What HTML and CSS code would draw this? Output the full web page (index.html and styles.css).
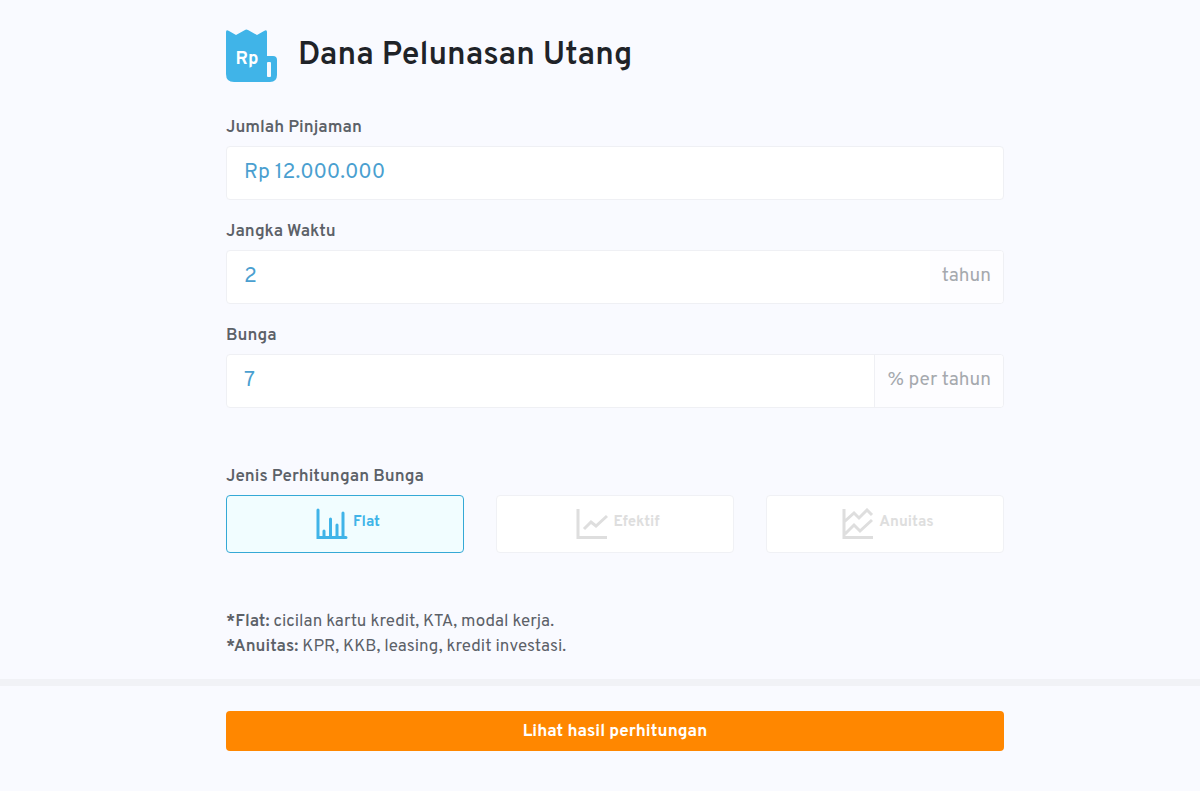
FILE: index.html
```html
<!DOCTYPE html>
<html lang="id">
<head>
<meta charset="utf-8">
<meta name="viewport" content="width=device-width, initial-scale=1">
<title>Dana Pelunasan Utang</title>
<link rel="stylesheet" href="styles.css">
</head>
<body>
<form class="calculator">
  <main class="content">
    <header class="heading">
      <svg class="logo" viewBox="0 0 52 54" role="img" aria-label="Rp">
        <path class="logo-shape" d="M0 3Q0 0 3 2L10 6L19 1Q20 0 22 1L31 6L38 2Q41 0 41 3V27H47Q51 27 51 31V46Q51 53 44 53H8Q0 53 0 45Z"/>
        <rect class="logo-slot" x="41" y="33" width="4" height="15" rx="1"/>
        <text class="logo-text" x="21" y="35" text-anchor="middle">Rp</text>
      </svg>
      <h1 class="title">Dana Pelunasan Utang</h1>
    </header>

    <div class="field">
      <label class="label" for="amount">Jumlah Pinjaman</label>
      <div class="control"><input class="input" id="amount" type="text" value="Rp 12.000.000"></div>
    </div>
    <div class="field">
      <label class="label" for="period">Jangka Waktu</label>
      <div class="control"><input class="input" id="period" type="text" value="2"><span class="unit">tahun</span></div>
    </div>
    <div class="field">
      <label class="label" for="rate">Bunga</label>
      <div class="control"><input class="input" id="rate" type="text" value="7"><span class="unit unit-divided">% per tahun</span></div>
    </div>

    <section class="methods" aria-labelledby="method-label">
      <h2 class="label" id="method-label">Jenis Perhitungan Bunga</h2>
      <div class="options">
        <button class="option option-active" type="button" aria-pressed="true">
          <svg class="chart" viewBox="0 0 32 32" aria-hidden="true"><path d="M2 2V29.500H30M8 29V23M14.500 29V11M21 29V17M27 29V5"/></svg>
          <span>Flat</span>
        </button>
        <button class="option" type="button" aria-pressed="false">
          <svg class="chart" viewBox="0 0 32 32" aria-hidden="true"><path d="M2 1V29.500H31M8 21L15 14L20 18L31 8"/></svg>
          <span>Efektif</span>
        </button>
        <button class="option" type="button" aria-pressed="false">
          <svg class="chart" viewBox="0 0 32 32" aria-hidden="true"><path d="M2 1V29.500H31M2 14L12 5L17 10L25 2L30 7M3 26L12 17L18 23L30 12"/></svg>
          <span>Anuitas</span>
        </button>
      </div>
    </section>

    <p class="notes"><strong>*Flat:</strong> cicilan kartu kredit, KTA, modal kerja.<br><strong>*Anuitas:</strong> KPR, KKB, leasing, kredit investasi.</p>
  </main>
  <footer class="footer">
    <button class="submit" type="submit">Lihat hasil perhitungan</button>
  </footer>
</form>
</body>
</html>
```
FILE: styles.css
```css
* { box-sizing: border-box; }
body {
  margin: 0;
  background: #f9faff;
  color: #5c6168;
  font-family: Overpass, Inter, sans-serif;
}
.content { padding: 29px 196px 19px 226px; }
.heading {
  display: flex;
  align-items: flex-start;
  gap: 20px;
  margin-bottom: 33px;
}
.logo { width: 52px; height: 54px; flex: none; }
.logo-shape { fill: #40b4e8; }
.logo-slot { fill: #f9faff; }
.logo-text { fill: #fff; font-size: 18px; font-weight: 700; }
.title {
  margin: 0;
  color: #1f2328;
  font-size: 32px;
  font-weight: 600;
  line-height: 54px;
}
.field { margin-bottom: 20px; }
.label {
  display: block;
  margin: 0 0 6px;
  font-size: 17px;
  font-weight: 600;
  line-height: 24px;
}
.control {
  display: flex;
  height: 54px;
  overflow: hidden;
  background: #fff;
  border: 1px solid #eff0f4;
  border-radius: 4px;
}
.input {
  flex: 1;
  min-width: 0;
  padding: 0 17px 2px;
  border: 0;
  background: transparent;
  color: #4a9fd0;
  font-family: inherit;
  font-size: 21px;
}
.unit {
  padding: 0 12px;
  background: #fdfdff;
  color: #a5a9ae;
  font-size: 19px;
  line-height: 50px;
}
.unit-divided { border-left: 1px solid #eff0f4; }
.methods { padding-top: 37px; }
.options {
  display: grid;
  grid-template-columns: repeat(3, 1fr);
  gap: 32px;
}
.option {
  display: flex;
  align-items: center;
  justify-content: center;
  gap: 5px;
  height: 58px;
  padding: 0 0 0 6px;
  background: #fff;
  border: 1px solid #f0f1f5;
  border-radius: 4px;
  color: #dedede;
  font-family: inherit;
  font-size: 15px;
  font-weight: 700;
  line-height: 20px;
}
.option span { padding-bottom: 2px; }
.option-active {
  background: #f1fdff;
  border-color: #35a9d6;
  color: #40b4e8;
}
.chart {
  width: 32px;
  height: 32px;
  fill: none;
  stroke: currentColor;
  stroke-width: 3;
}
.option-active .chart { stroke-linecap: round; }
.notes {
  margin: 57px 0 0;
  font-size: 17px;
  line-height: 25px;
}
.notes strong { font-weight: 600; }
.footer {
  padding: 25px 196px 39px 226px;
  border-top: 7px solid #f1f2f6;
}
.submit {
  display: block;
  width: 100%;
  height: 40px;
  padding: 2px 0 0;
  background: #ff8700;
  border: 0;
  border-radius: 4px;
  color: #fff;
  font-family: inherit;
  font-size: 17px;
  font-weight: 700;
}
```
